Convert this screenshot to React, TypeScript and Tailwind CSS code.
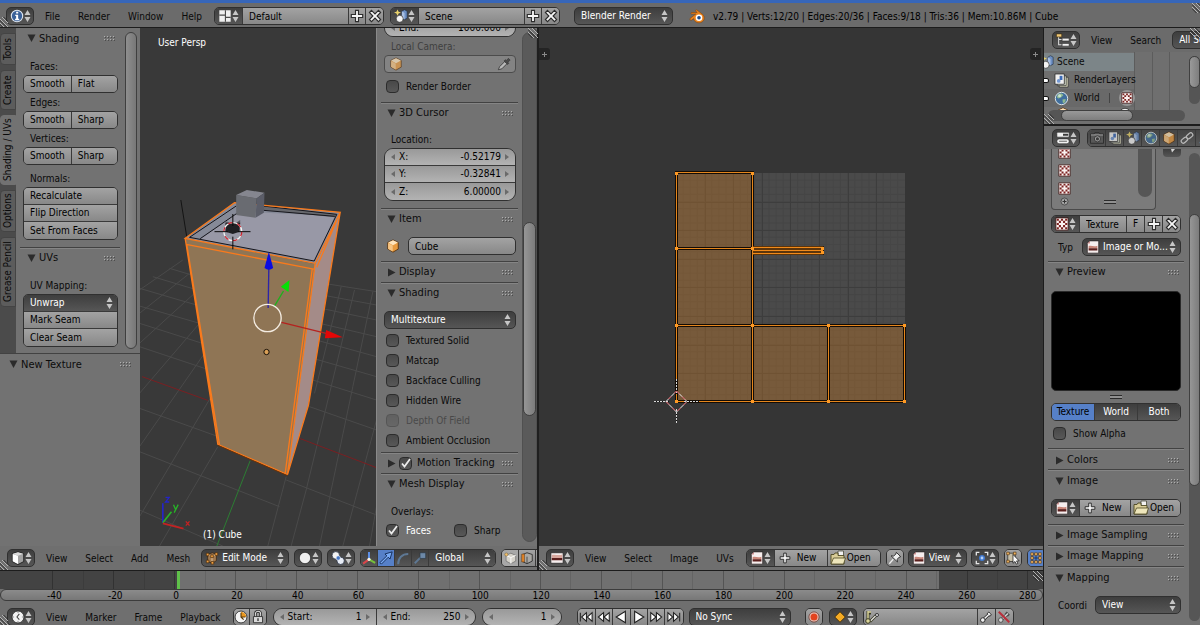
import type { ReactNode } from "react";
import clsx from "clsx";

const light = "bg-gradient-to-b from-[#a3a3a3] to-[#888888] text-black";
const dark = "bg-gradient-to-b from-[#3e3e3e] to-[#565656] text-white";
const frame = "border border-[#303030] rounded-[5px] overflow-hidden";

/* ---------- icons ---------- */

function UpDown() {
  return (
    <svg viewBox="0 0 7 12" className="pointer-events-none h-3 w-[7px] shrink-0" fill="#c6c6c6">
      <path d="M3.5 0 6.5 5h-6zM3.5 12 6.500 7h-6z" />
    </svg>
  );
}

function Triangle({ open }: { open: boolean }) {
  return (
    <svg viewBox="0 0 9 9" className="h-[9px] w-[9px] shrink-0" fill="#2b2b2b">
      <path d={open ? "M0.5 0.500h8L4.5 8z" : "M1 0.5v8L8.5 4.5z"} />
    </svg>
  );
}

function Grip() {
  return (
    <svg viewBox="0 0 12 5" className="h-[5px] w-3 shrink-0" shapeRendering="crispEdges">
      {[0, 3, 6, 9].map((x) => (
        <g key={x}>
          <path d={`M${x} 0h1v1h-1zM${x} 3h1v1h-1z`} fill="#b0b0b0" />
          <path d={`M${x + 1} 1h1v1h-1zM${x + 1} 4h1v1h-1z`} fill="#4c4c4c" />
        </g>
      ))}
    </svg>
  );
}

// diagonal handle in the corner of an area, used to split it
function Corner({ className }: { className: string }) {
  return (
    <svg viewBox="0 0 10 10" className={clsx("pointer-events-none absolute h-2.5 w-2.5", className)} fill="none">
      <path d="M0 0l10 10M0 4l6 6M4 0l6 6" stroke="#b4b4b4" />
      <path d="M0 1.500 8.500 10M0 5.500 4.500 10M5.500 0 10 4.500" stroke="#2a2a2a" />
    </svg>
  );
}

function Icon({ name, size = "h-3.5 w-3.5" }: { name: keyof typeof icons; size?: string }) {
  return (
    <svg viewBox="0 0 16 16" className={clsx("shrink-0", size)} fill="none">
      {icons[name]}
    </svg>
  );
}

const icons = {
  info: (
    <>
      <circle cx="8" cy="8" r="6.500" fill="#3a6199" stroke="#dfe8f3" strokeWidth="1.200" />
      <path d="M7 3h2.400v2.200H7zM6 6.600h3.300v4.600h1.200v1.600H5.800v-1.600H7V8.100H6z" fill="#fff" />
    </>
  ),
  layout: (
    <>
      <path d="M1.500 1.500h13v13h-13z" fill="#efefef" />
      <path d="M8.500 1.500v13M1.500 7h7M8.500 9.500h6" stroke="#4a4a4a" strokeWidth="1.300" />
    </>
  ),
  scene: (
    <>
      <path d="M4 0.5 5.2 3 8 4 5.2 5.2 4 8 2.8 5.2 0 4 2.8 3z" fill="#e9d36b" />
      <path d="M9 2.500 12 0.8 15 2.500v8l-3 1.600L9 10.500z" fill="#6c8fc4" stroke="#1d2c44" strokeWidth=".7" />
      <path d="M12 4.500v7.600L9 10.500v-8z" fill="#a9c0e2" />
      <circle cx="6.500" cy="11.200" r="4" fill="#f4f4f4" stroke="#222" strokeWidth=".7" />
    </>
  ),
  plus: (
    <path d="M6.3 1.500h3.400v4.800h4.800v3.400H9.700v4.800H6.300V9.700H1.500V6.300h4.800z" fill="#f6f6f6" stroke="#2c2c2c" strokeWidth="1.300" />
  ),
  cross: (
    <path d="M4 1.600 8 5.600l4-4L14.400 4l-4 4 4 4L12 14.400l-4-4-4 4L1.600 12l4-4-4-4z" fill="#f6f6f6" stroke="#2c2c2c" strokeWidth="1.300" />
  ),
  blender: (
    <>
      <path d="M1 10.500 6.800 6H2.600c-1 0-1-1.500 0-1.500h5.600L6.800 3.300c-.7-.7.3-1.900 1.200-1.300l5.500 4.300c3.300 3 1.700 8.400-3.500 8.500-3 0-5-1.800-5.300-4.200l-2 1.500C1.600 12.700.2 11.400 1 10.500z" fill="#e8821e" stroke="#7d3c05" strokeWidth=".5" />
      <circle cx="10" cy="9.800" r="3.300" fill="#fff" />
      <circle cx="10" cy="9.800" r="1.800" fill="#1f4b87" />
    </>
  ),
  cube: (
    <>
      <path d="M8 1 14 4v7.500L8 15l-6-3.500V4z" fill="#e79a3f" stroke="#4e2a08" strokeWidth=".9" />
      <path d="M8 1.400 13.600 4 8 7 2.400 4z" fill="#fde4bd" />
      <path d="M2.400 4.500 7.700 7.300v7L2.400 11.300z" fill="#f6c584" />
    </>
  ),
  grayCube: (
    <>
      <path d="M8 1 14.500 3v9L8 15.500 1.500 12V3z" fill="#a2a2a2" stroke="#161616" strokeWidth=".9" />
      <path d="M2 3.500 8 5.500v9.300l-6-3.200z" fill="#fff" />
      <path d="M8 1.300 14 3.200 8 5.300 2 3.200z" fill="#dcdcdc" />
    </>
  ),
  editCube: (
    <>
      <path d="M3 4l5.500-2L13 4v7l-4.500 3L3 12z" fill="#a17a50" stroke="#32200f" strokeWidth=".8" />
      <path d="M3 4l5 2v7.500M8 6l5-2" stroke="#e8c9a2" strokeWidth="1" />
      <path d="M1.500 2.500h3v3h-3zM11.500 2h3v3h-3zM6.500 4.500h3v3h-3zM1.500 10.500h3v3h-3zM7 12h3v3H7z" fill="#f0a040" stroke="#3c2106" strokeWidth=".7" />
    </>
  ),
  ball: <circle cx="8" cy="8" r="6.500" fill="#f1f1f1" stroke="#1c1c1c" strokeWidth=".8" />,
  pivot: (
    <>
      <circle cx="5.500" cy="5" r="4.300" fill="#f3f3f3" stroke="#182337" strokeWidth=".8" />
      <circle cx="11" cy="11.200" r="4.200" fill="#e7ecf5" stroke="#182337" strokeWidth=".8" />
      <circle cx="8.300" cy="8" r="2.500" fill="#4676c4" stroke="#fff" strokeWidth=".7" />
    </>
  ),
  axes: (
    <>
      <path d="M8 9.500V1" stroke="#5f93ee" strokeWidth="2.200" />
      <path d="M8 9.500 1.200 14.500" stroke="#d8454a" strokeWidth="2.400" />
      <path d="M8 9.500l7 4" stroke="#76c23a" strokeWidth="2.400" />
      <circle cx="8" cy="9.500" r="1.800" fill="#f5f5e8" />
    </>
  ),
  arrow: <path d="M1 13.300 9 5.500 6.800 3.400 15 1l-2.400 8.200-2-2.100L2.700 15z" fill="#79aaf5" stroke="#0e2650" strokeWidth="1" />,
  arc: <path d="M2.500 15C2.500 8 7 3.500 14 3.500" stroke="#5e7894" strokeWidth="2.200" />,
  scale: (
    <>
      <path d="M2 14 9 7" stroke="#5e7894" strokeWidth="2.200" />
      <path d="M8 2h6.500v6.500H8z" fill="#6d89a8" stroke="#26313d" strokeWidth=".7" />
    </>
  ),
  vertexCube: (
    <>
      <path d="M9 2.500 14.500 5v6.500L9 14.500 3.500 11.500V5z" fill="#d6d3cb" stroke="#6b6b6b" strokeWidth=".8" />
      <path d="M3.500 5 9 7.500v7M9 7.500 14.500 5" stroke="#fff" />
      <circle cx="3.800" cy="4" r="1.800" fill="#f3c06a" stroke="#75623c" strokeWidth=".6" />
    </>
  ),
  edgeCube: (
    <>
      <path d="M8 2 14 4v7.500L8 14.500 3 12V4z" fill="#aaa8a4" stroke="#1e1e1e" strokeWidth=".9" />
      <path d="M8 6.500V14" stroke="#444" />
      <path d="M2 3.500h3v9H2z" fill="#e8882a" stroke="#4e2a08" strokeWidth=".6" />
    </>
  ),
  image: (
    <>
      <path d="M4.500 1H14.500v14H1.500V4z" fill="#f6eeee" stroke="#2a2222" strokeWidth=".8" />
      <path d="M3 7c3-1 6 1 10-.5v3H3z" fill="#c98679" />
      <path d="M3 9.300h10v2.700H3z" fill="#5b1f1d" />
      <path d="M1.500 4h3V1z" fill="#d09090" />
    </>
  ),
  imageEditor: (
    <>
      <path d="M1 2h14v12H1z" fill="#f6eeee" stroke="#1c1c1c" strokeWidth=".8" />
      <path d="M2 4.500c4-1.200 8 1.200 12-.5v4H2z" fill="#d9a79e" />
      <path d="M2 8h12v2.500H2z" fill="#5b1f1d" />
    </>
  ),
  folder: (
    <>
      <path d="M8 1h5.500v7H8z" fill="#f2f2f2" stroke="#4a4a3a" strokeWidth=".8" />
      <path d="M1 4.500h3l1-1.500h3v2.500h6V14H1z" fill="#d9cd98" stroke="#4d4722" strokeWidth=".9" />
      <path d="M3.500 8H15.500L13.500 14H1z" fill="#eee6bb" stroke="#4d4722" strokeWidth=".8" />
    </>
  ),
  pin: (
    <>
      <path d="M1.500 14.500 6 9.500" stroke="#ededed" strokeWidth="1.500" />
      <path d="M9.500 1.500 14.500 6.500 12.500 7.200 10.500 9.500l.3 3L3.500 5.500l3 .3L9 3.500z" fill="#efefef" stroke="#242424" strokeWidth="1" />
    </>
  ),
  bounds: (
    <>
      <path d="M1.500 5V1.500H5M11 1.500h3.500V5M14.500 11v3.500H11M5 14.500H1.500V11" stroke="#e6e6e6" strokeWidth="1.500" />
      <circle cx="8" cy="8" r="2.500" fill="#b5d0f5" stroke="#3f78cf" strokeWidth="1.800" />
    </>
  ),
  sync: (
    <>
      <path d="M2 2.500h8.500V12H2z" fill="#c9c0a8" stroke="#222" strokeWidth=".8" />
      <path d="M.8 1.300h3v3h-3zM8.500 1.300h3v3h-3zM.8 10.500h3v3h-3z" fill="#f3b55d" stroke="#3c2106" strokeWidth=".6" />
      <path d="M8 4v10l2.300-2 1.500 3 1.700-.8-1.500-2.900H15z" fill="#fff" stroke="#111" strokeWidth=".8" />
    </>
  ),
  verts: (
    <>
      <path d="M3.500 3.500h9v9h-9zM8 3.500v9M3.500 8h9" stroke="#15305f" strokeWidth="1" />
      <path d="M2 2h3v3H2zM6.500 2h3v3h-3zM11 2h3v3h-3zM2 6.500h3v3H2zM11 6.500h3v3h-3zM2 11h3v3H2zM6.500 11h3v3h-3zM11 11h3v3h-3z" fill="#f3b55d" stroke="#4a2a05" strokeWidth=".6" />
    </>
  ),
  timeline: (
    <>
      <circle cx="8" cy="8" r="6.800" fill="#f2f2f2" stroke="#1c1c1c" strokeWidth=".8" />
      <path d="M9.500 4.500 6.800 8l2.700 3" stroke="#444" strokeWidth="1.200" />
      <path d="M8 2v1.500M8 12.500V14M2 8h1.500M12.500 8H14" stroke="#777" strokeWidth=".9" />
    </>
  ),
  clock: (
    <>
      <circle cx="8" cy="8" r="6.800" fill="#f4f4f4" stroke="#2a2a2a" strokeWidth="1" />
      <path d="M8 8V2a6 6 0 0 1 6 6z" fill="#e9971f" />
      <path d="M8 3v5h5M8 8l3 3" stroke="#5c3a08" strokeWidth="1.300" />
    </>
  ),
  lock: (
    <>
      <path d="M5 8V4.500a3 3 0 0 1 6 0V8" stroke="#2a2a2a" strokeWidth="3" />
      <path d="M5 8V4.500a3 3 0 0 1 6 0V8" stroke="#dcdcdc" strokeWidth="1.200" />
      <path d="M2.800 7.500h10.400v7H2.800z" fill="#d9d9d9" stroke="#2a2a2a" strokeWidth="1" />
      <path d="M8 9.500v3" stroke="#333" strokeWidth="1.500" />
    </>
  ),
  first: <path d="M1.500 3v10M8.500 3v10L3 8zM15 3v10L9.500 8z" fill="#fff" stroke="#222" strokeWidth="1.200" />,
  prev: <path d="M7.500 3v10L1.500 8zM14 3v10L8 8z" fill="#fff" stroke="#222" strokeWidth="1.200" />,
  playBack: <path d="M13 1.500v13L2.500 8z" fill="#fff" stroke="#222" strokeWidth="1.300" />,
  play: <path d="M3 1.500v13L13.500 8z" fill="#fff" stroke="#222" strokeWidth="1.300" />,
  next: <path d="M2 3v10l6-5zM8.500 3v10l6-5z" fill="#fff" stroke="#222" strokeWidth="1.200" />,
  last: <path d="M1 3v10l5.500-5zM7.500 3v10L13 8zM14.500 3v10" fill="#fff" stroke="#222" strokeWidth="1.200" />,
  record: (
    <>
      <circle cx="8" cy="8" r="5.800" fill="#e9c7bd" stroke="#6a2a20" strokeWidth=".8" />
      <circle cx="8" cy="8" r="4" fill="#e2431f" />
    </>
  ),
  diamond: <path d="M8 2 14 8 8 14 2 8z" fill="#f4ab24" stroke="#3a2503" strokeWidth=".9" />,
  keys: (
    <>
      <path d="M4 2v8M4 4h3M6 12.500 13 5.500" stroke="#3a3a22" strokeWidth="3" />
      <path d="M4 2v8M4 3h3" stroke="#dad49a" strokeWidth="1.500" />
      <path d="M6.500 12 13 5.500" stroke="#e4e4e4" strokeWidth="1.300" />
      <circle cx="4" cy="12" r="2.300" fill="#dad49a" stroke="#3a3a22" />
      <circle cx="13" cy="6" r="1.500" fill="#efefef" stroke="#333" />
    </>
  ),
  key: (
    <>
      <path d="M5 11 12.500 4M10 3l3.500 3.500" stroke="#262626" strokeWidth="3.300" />
      <path d="M5 11 12.500 4M10.500 3.500l2.500 2.500" stroke="#f1f1f1" strokeWidth="1.600" />
      <circle cx="4.300" cy="11.500" r="2.600" fill="#f1f1f1" stroke="#262626" />
    </>
  ),
  keyOff: (
    <>
      <path d="M5 11 12.500 4M10 3l3.500 3.500" stroke="#4a4a4a" strokeWidth="3.300" />
      <path d="M5 11 12.500 4" stroke="#d5d5d5" strokeWidth="1.600" />
      <circle cx="4.300" cy="11.500" r="2.600" fill="#d5d5d5" stroke="#4a4a4a" />
      <path d="M2 2l12 12" stroke="#b92f3a" strokeWidth="2.200" />
    </>
  ),
  outliner: (
    <>
      <path d="M3 3v10.500h3.500M3 7.500h3.500" stroke="#d9d9d9" strokeWidth="1.200" />
      <path d="M0.500 1h6v3.500h-6z" fill="#f0c878" stroke="#3f2e0c" strokeWidth=".7" />
      <path d="M7 6h8v3H7zM7 12h8v3H7z" fill="#f1f1f1" stroke="#222" strokeWidth=".6" />
    </>
  ),
  properties: (
    <>
      <rect x="1" y="1.500" width="14" height="5.500" rx="1" fill="#f1f1f1" stroke="#222" strokeWidth=".6" />
      <path d="M8 3h6v2.500H8z" fill="#3a3a3a" />
      <rect x="1" y="9" width="14" height="5.500" rx="2.500" fill="#f1f1f1" stroke="#222" strokeWidth=".6" />
      <path d="M3.500 11.700h9" stroke="#555" />
    </>
  ),
  camera: (
    <>
      <path d="M0.500 3.500h4l1-1.500h5l1 1.500h4v10.500h-15z" fill="#5d5d5d" stroke="#141414" strokeWidth=".9" />
      <path d="M1 4.500h14" stroke="#c9c9c9" />
      <circle cx="8.500" cy="9" r="3.500" fill="#bdbdbd" stroke="#222" />
      <circle cx="8.500" cy="9" r="1.800" fill="#333" />
    </>
  ),
  layers: (
    <>
      <path d="M5.500 4.500h9.500v10.500H5.500z" fill="#e9e7c8" stroke="#2b2b2b" strokeWidth=".8" />
      <path d="M3.500 3h9.500v10.500H3.500z" fill="#dfe4d0" stroke="#2b2b2b" strokeWidth=".8" />
      <path d="M1 1h10v11H1z" fill="#f1f1f1" stroke="#2b2b2b" strokeWidth=".9" />
      <path d="M6 3h3v4.500H6z" fill="#3c6bb8" />
      <circle cx="5" cy="8.500" r="2" fill="#7398d3" />
    </>
  ),
  world: (
    <>
      <circle cx="8" cy="8" r="6.600" fill="#416f9e" stroke="#e4ecec" strokeWidth="1" />
      <path d="M4 4c2-2 5-1.500 6 .5L7.500 7 4.500 8 3 6.500zM9 9l3.500-.5L12 12l-2.500 1z" fill="#8fb98f" />
      <circle cx="6" cy="5" r="1.600" fill="#e7f4ee" opacity=".7" />
    </>
  ),
  link: (
    <>
      <rect x="-4" y="-2.300" width="8" height="4.600" rx="2.300" transform="translate(5 10.500) rotate(-40)" stroke="#dedede" strokeWidth="1.400" />
      <rect x="-4" y="-2.300" width="8" height="4.600" rx="2.300" transform="translate(11 5.500) rotate(-40)" stroke="#dedede" strokeWidth="1.400" />
    </>
  ),
  texture: (
    <>
      <path d="M1 1h14v14H1z" fill="#fbf3f2" stroke="#3a1715" strokeWidth="1" />
      <path d="M2 2h2.400v2.400H2zM6.800 2h2.400v2.400H6.800zM11.600 2H14v2.400h-2.400zM4.400 4.400h2.400v2.400H4.400zM9.200 4.400h2.400v2.400H9.200zM2 6.800h2.400v2.400H2zM11.600 6.800H14v2.400h-2.400zM4.400 9.200h2.400v2.400H4.400zM9.200 9.200h2.400v2.400H9.200zM2 11.600h2.400V14H2zM6.800 11.600h2.400V14H6.800zM11.600 11.600H14V14h-2.400z" fill="#7c2321" />
    </>
  ),
  dropper: (
    <>
      <path d="M1.500 14.500 3 11 9 5l2.500 2.500-6 6z" fill="#b9b9b9" stroke="#333" strokeWidth=".9" />
      <path d="M8 4.500 9.500 3l1.200 1L13 1.500 15 3.500 12.500 6l1 1.200L12 8.500z" fill="#4a4a4a" stroke="#2c2c2c" strokeWidth=".6" />
    </>
  ),
};

/* ---------- widgets ---------- */

function MenuButton({ icon, label, flat }: { icon: keyof typeof icons; label: string; flat?: boolean }) {
  return (
    <button aria-label={label} className={clsx("flex w-7 shrink-0 items-center justify-between px-[3px]", dark, flat ? "h-4" : "h-[18px]", !flat && frame)}>
      <Icon name={icon} />
      <UpDown />
    </button>
  );
}

function IconButton({ icon, label, tone = light, className = "w-[17px]" }: { icon: keyof typeof icons; label: string; tone?: string; className?: string }) {
  return (
    <button aria-label={label} className={clsx("flex h-4 shrink-0 items-center justify-center", tone, className)}>
      <Icon name={icon} />
    </button>
  );
}

function Menus({ items }: { items: string[] }) {
  return (
    <nav className="ml-[11px] flex gap-[18px] pt-0.5">
      {items.map((m) => <button key={m}>{m}</button>)}
    </nav>
  );
}

function Group({ children, className }: { children: ReactNode; className?: string }) {
  return <div className={clsx("flex shrink-0 divide-x divide-[#3a3a3a]", frame, className)}>{children}</div>;
}

function Stack({ children, round = "rounded-[5px]" }: { children: ReactNode; round?: string }) {
  return <div className={clsx("flex flex-col divide-y divide-[#3a3a3a] overflow-hidden border border-[#303030] *:h-[17px]", round)}>{children}</div>;
}

function Button({ children, className }: { children: ReactNode; className?: string }) {
  return <button className={clsx("h-4 px-1.5 text-left", light, className)}>{children}</button>;
}

function Dropdown({ label, value, icon, className, bare }: { label: string; value: string; icon?: keyof typeof icons; className?: string; bare?: boolean }) {
  return (
    <div className={clsx("flex shrink-0 items-center gap-[3px] pr-1", icon ? "pl-[3px]" : "pl-1.5", dark, bare ? "h-4" : "h-[18px]", !bare && frame, className)}>
      {icon && <Icon name={icon} />}
      <select aria-label={label} className="-mr-1 h-4 min-w-0 flex-1 appearance-none bg-transparent">
        <option>{value}</option>
      </select>
      <UpDown />
    </div>
  );
}

function NumberField({ label, value, className, name }: { label?: string; value: string; className?: string; name?: string }) {
  return (
    <label className={clsx("flex h-4 items-center gap-1 bg-gradient-to-b from-[#999999] to-[#b3b3b3] px-1.5 text-black", className)}>
      <svg viewBox="0 0 4 6" className="h-1.5 w-1 shrink-0" fill="#6a6a6a"><path d="M4 0v6L0 3z" /></svg>
      {label}
      <input aria-label={label ?? name} defaultValue={value} className="w-0 min-w-0 flex-1 bg-transparent text-right" />
      <svg viewBox="0 0 4 6" className="h-1.5 w-1 shrink-0" fill="#6a6a6a"><path d="M0 0v6L4 3z" /></svg>
    </label>
  );
}

function Check({ label, checked, disabled, className, hideLabel }: { label: string; checked?: boolean; disabled?: boolean; className?: string; hideLabel?: boolean }) {
  return (
    <label className={clsx("flex h-5 items-center", disabled && "opacity-40", className)}>
      <span className="grid">
        <input
          type="checkbox"
          aria-label={label}
          defaultChecked={checked}
          disabled={disabled}
          className="peer col-start-1 row-start-1 h-[13px] w-[13px] appearance-none rounded-[4px] border border-[#2c2c2c] bg-gradient-to-b from-[#484848] to-[#585858]"
        />
        <svg viewBox="0 0 13 13" className="pointer-events-none invisible col-start-1 row-start-1 h-[13px] w-[13px] overflow-visible peer-checked:visible" fill="none">
          <path d="M3 6.500 5.500 9.500 11 2" stroke="#ececec" strokeWidth="1.800" />
        </svg>
      </span>
      {!hideLabel && <span className="ml-[7px] pt-0.5">{label}</span>}
    </label>
  );
}

function PanelTitle({ title, open = true, first, children, className }: { title: string; open?: boolean; first?: boolean; children?: ReactNode; className?: string }) {
  return (
    <div className={clsx("flex h-[21px] shrink-0 items-center gap-[3px] pr-1 text-[11px] text-[#0c0c0c]", !first && "border-t border-[#424242] shadow-[inset_0_1px_0_#858585]", className)}>
      <Triangle open={open} />
      {children}
      <h2 className="flex-1 whitespace-nowrap">{title}</h2>
      <Grip />
    </div>
  );
}

function Label({ children, className }: { children: ReactNode; className?: string }) {
  return <div className={clsx("flex h-[18px] items-center pl-[7px] pt-0.5", className)}>{children}</div>;
}

/* ---------- top bar ---------- */

function TopBar() {
  return (
    <header className="relative flex h-[25px] shrink-0 items-center overflow-hidden whitespace-nowrap border-b border-[#1c1c1c] bg-[#6b6b6b] pb-0.5 pl-1.5 pt-1">
      <MenuButton icon="info" label="Editor type" />
      <Menus items={["File", "Render", "Window", "Help"]} />
      <Group className="ml-3">
        <MenuButton icon="layout" label="Screen layout" flat />
        <input aria-label="Screen" defaultValue="Default" className={clsx("h-4 w-[106px] px-1.5", light)} />
        <IconButton icon="plus" label="Add screen" />
        <IconButton icon="cross" label="Delete screen" />
      </Group>
      <Group className="ml-1.5">
        <MenuButton icon="scene" label="Browse scene" flat />
        <input aria-label="Scene" defaultValue="Scene" className={clsx("h-4 w-[106px] px-1.5", light)} />
        <IconButton icon="plus" label="Add scene" />
        <IconButton icon="cross" label="Delete scene" />
      </Group>
      <Dropdown label="Render engine" value="Blender Render" className="ml-3.5 w-[99px]" />
      <span className="ml-4"><Icon name="blender" size="h-4 w-4" /></span>
      <span className="ml-2 pt-0.5 text-black">v2.79 | Verts:12/20 | Edges:20/36 | Faces:9/18 | Tris:36 | Mem:10.86M | Cube</span>
      <Corner className="-left-0.5 bottom-0" />
      <Corner className="-right-0.5 top-0" />
    </header>
  );
}

/* ---------- 3D view ---------- */

const tabs = [
  { name: "Tools", size: "h-8" },
  { name: "Create", size: "h-10" },
  { name: "Shading / UVs", size: "h-[70px]", active: true },
  { name: "Options", size: "h-[42px]" },
  { name: "Grease Pencil", size: "h-[70px]" },
];

function ToolShelf() {
  return (
    <aside className="flex w-[140px] shrink-0 flex-col overflow-hidden bg-[#727272]">
      <div className="flex border-b border-[#424242]">
        <div className="flex w-4 shrink-0 flex-col gap-[5px] bg-[#4b4b4b] pt-[5px]">
          {tabs.map((t) => (
            <button
              key={t.name}
              className={clsx(
                "flex w-4 rotate-180 items-center justify-center whitespace-nowrap rounded-r-[4px] border [writing-mode:vertical-rl]",
                t.size,
                t.active ? "border-[#727272] bg-[#727272]" : "border-[#444444] bg-[#5c5c5c]",
              )}
            >
              {t.name}
            </button>
          ))}
        </div>
        <div className="min-w-0 flex-1 pb-[6px] pl-1">
          <PanelTitle title="Shading" first className="pl-[7px]" />
          <div className="pb-[7px] pl-[3px] pr-0.5 pt-2">
            {[["Faces:", "Smooth", "Flat"], ["Edges:", "Smooth", "Sharp"], ["Vertices:", "Smooth", "Sharp"]].map(([l, a, b]) => (
              <div key={l}>
                <Label>{l}</Label>
                <Group>
                  <Button className="flex-1">{a}</Button>
                  <Button className="flex-1">{b}</Button>
                </Group>
              </div>
            ))}
            <Label className="mt-1">Normals:</Label>
            <Stack>
              <Button>Recalculate</Button>
              <Button>Flip Direction</Button>
              <Button>Set From Faces</Button>
            </Stack>
          </div>
          <PanelTitle title="UVs" className="pl-[7px]" />
          <div className="pl-[3px] pr-0.5 pt-2">
            <Label>UV Mapping:</Label>
            <Stack>
              <Dropdown label="UV Mapping" value="Unwrap" bare />
              <Button>Mark Seam</Button>
              <Button>Clear Seam</Button>
            </Stack>
          </div>
        </div>
        <div className="w-5 shrink-0 py-1 pl-[5px]">
          <div className="h-full w-3 rounded-full border border-[#3f3f3f] bg-gradient-to-r from-[#8f8f8f] to-[#777777]" />
        </div>
      </div>
      <PanelTitle title="New Texture" first className="pl-[9px] pr-2" />
    </aside>
  );
}

function Viewport() {
  return (
    <div className="relative min-w-0 flex-1 bg-[#393939]">
      <svg viewBox="0 -456 711 1554" preserveAspectRatio="xMidYMid slice" className="absolute inset-0 h-full w-full" fill="none" strokeWidth="3">
        <g stroke="#4a4a4a">
          <path d="M90 265 180 292M40 290 190 335M0 325 205 385M0 378 215 440M0 430 220 500M0 500 225 575M0 685 320 800M0 815 420 980M0 990 250 1098M565 312 711 335M548 345 711 375M545 385 711 420M540 430 711 470M530 480 711 530M520 535 711 590M520 600 711 660M510 680 711 750M440 900 711 1005" />
          <path d="M130 240 0 330M150 280 0 400M165 340 0 490M180 430 0 640M195 520 0 800M215 650 0 1010M235 800 60 1098M440 890 385 1098M605 320 525 640M645 330 500 930 455 1098M700 335 640 620 540 1098M711 720 610 1098M711 980 690 1098" />
        </g>
        <path d="M8 590 205 661M480 775 711 863" stroke="#7a1f22" />
        <path d="M332 842 232 1098" stroke="#2c7d33" />

        <path d="M124 60 142 172" stroke="#141414" />
        <path d="M137 175 285 68 602 97 527 252z" fill="#868a98" />
        <path d="M182 178 300 95 586 108 524 243z" fill="#9898a6" />
        <path d="M370 78 592 103 586 112 372 90z" fill="#66676c" />
        <path d="M137 175 527 252 526 268 444 884 235 793z" fill="#8f7555" />
        <path d="M602 97 527 252 444 884 507 675z" fill="#a48b88" />
        <path d="M150 172 290 78M182 176 298 96M370 78 592 103M372 91 586 109M592 103 524 243M150 172 524 243" stroke="#15151b" />
        <path d="M137 175 285 68 602 97 527 250zM140 193 526 268M137 175 235 793 444 884M142 195 240 794M527 250 444 884 507 675 602 97M518 268 437 880M592 120 532 262" stroke="#f97a1c" strokeWidth="4" />
        <path d="M235 796 444 887" stroke="#6a3208" />

        <path d="M290 45 352 55 348 113 290 105z" fill="#696b71" />
        <path d="M290 45 322 30 375 38 352 55z" fill="#85868f" />
        <path d="M352 55 375 38 373 98 348 113z" fill="#5b5d68" />

        <path d="M258 124 285 132 302 120 302 132 258 134z" fill="#55565e" />
        <path d="M258 130 302 128 300 155 280 162 258 155z" fill="#202024" />
        <circle cx="280" cy="155" r="27" stroke="#f4f4f4" strokeWidth="4" />
        <circle cx="280" cy="155" r="27" stroke="#c9222e" strokeWidth="4" strokeDasharray="14 14" />
        <path d="M225 155h40M295 155h38M280 102v36M280 170v38" stroke="#0b0b0b" />

        <path d="M386 384 388 262" stroke="#2d24a8" strokeWidth="4" />
        <path d="M375 264 388 215 401 264q-13 10-26 0z" fill="#0b0be0" />
        <path d="M404 380 432 333" stroke="#1db11d" strokeWidth="4" />
        <path d="M424 320 450 300 447 336z" fill="#06e006" />
        <path d="M426 427 560 460" stroke="#b5221f" strokeWidth="4" />
        <path d="M560 450 610 472 556 475z" fill="#e40606" />
        <circle cx="384" cy="414" r="41" stroke="#f4ece2" strokeWidth="4" />
        <circle cx="381" cy="516" r="8" fill="#d9a057" stroke="#171009" strokeWidth="3" />

        <path d="M70 1028V970" stroke="#2424c8" strokeWidth="5" />
        <path d="M70 1028 96 995" stroke="#27b327" strokeWidth="5" />
        <path d="M70 1030 132 1046" stroke="#c42222" strokeWidth="5" />
        <path d="M78 952h11l-11 14h11" stroke="#2424c8" strokeWidth="4" />
        <path d="M102 974l6 14M116 974l-12 24" stroke="#27b327" strokeWidth="4" />
        <path d="M139 1024l11 13M150 1024l-11 13" stroke="#c42222" strokeWidth="4" />
      </svg>
      <p className="absolute left-[18px] top-[9px] text-white">User Persp</p>
      <p className="absolute bottom-[5px] left-[63px] text-white">(1) Cube</p>
    </div>
  );
}

function PropertiesShelf() {
  return (
    <aside className="flex w-[161px] shrink-0 border-l border-[#8a8a8a] bg-[#727272]">
      <div className="h-0 min-h-full w-[141px] overflow-hidden pl-1">
        <div className="-mt-[9px] pl-[3px] pr-0.5">
          <div className="overflow-hidden rounded-full border border-[#303030]">
            <NumberField label="End:" value="1000.000" />
          </div>
          <Label className="text-[#3f3f3f]">Local Camera:</Label>
          <div className="flex h-[18px] items-center justify-between rounded-[4px] border border-[#4c4c4c] bg-[#838383] px-1">
            <span className="flex opacity-70"><Icon name="cube" /></span>
            <input aria-label="Local Camera" className="min-w-0 flex-1 bg-transparent" />
            <Icon name="dropper" />
          </div>
          <Check label="Render Border" className="mb-[6px] mt-[3px] pl-0.5" />
        </div>

        <PanelTitle title="3D Cursor" className="pl-1.5" />
        <div className="pb-[7px] pl-[3px] pr-0.5 pt-[7px]">
          <Label>Location:</Label>
          <Stack round="rounded-[9px]">
            <NumberField label="X:" value="-0.52179" />
            <NumberField label="Y:" value="-0.32841" />
            <NumberField label="Z:" value="6.00000" />
          </Stack>
        </div>

        <PanelTitle title="Item" className="pl-1.5" />
        <div className="flex items-center gap-2 pb-1.5 pl-[3px] pr-0.5 pt-2">
          <span className="pl-0.5"><Icon name="cube" /></span>
          <input aria-label="Item name" defaultValue="Cube" className={clsx("h-[18px] min-w-0 flex-1 px-1.5", light, frame)} />
        </div>

        <PanelTitle title="Display" open={false} className="pl-1.5" />
        <PanelTitle title="Shading" className="pl-1.5" />
        <div className="pb-0.5 pl-[3px] pr-0.5 pt-2">
          <Dropdown label="Shading mode" value="Multitexture" className="mb-px" />
          <Check label="Textured Solid" className="pl-0.5" />
          <Check label="Matcap" className="pl-0.5" />
          <Check label="Backface Culling" className="pl-0.5" />
          <Check label="Hidden Wire" className="pl-0.5" />
          <Check label="Depth Of Field" disabled className="pl-0.5" />
          <Check label="Ambient Occlusion" className="pl-0.5" />
        </div>

        <PanelTitle title="Motion Tracking" open={false} className="pl-1.5">
          <Check label="Motion Tracking" checked hideLabel className="mr-0.5" />
        </PanelTitle>
        <PanelTitle title="Mesh Display" className="pl-1.5" />
        <div className="pl-[3px] pr-0.5 pt-2">
          <Label>Overlays:</Label>
          <div className="grid grid-cols-2">
            <Check label="Faces" checked className="pl-0.5 text-white" />
            <Check label="Sharp" className="pl-1" />
          </div>
        </div>
      </div>
      <div className="flex flex-1 flex-col py-1 pl-1">
        <div className="flex flex-1 flex-col rounded-full border border-[#505050] bg-[#5a5a5a]">
          <div className="flex-[190]" />
          <div className="flex-[194] rounded-full border border-[#3f3f3f] bg-gradient-to-r from-[#969696] to-[#7c7c7c]" />
          <div className="flex-[126]" />
        </div>
      </div>
    </aside>
  );
}

function View3D() {
  return (
    <section className="relative flex min-w-0 flex-col border-r-2 border-[#1f1f1f]">
      <div className="flex min-h-0 flex-1">
        <ToolShelf />
        <Viewport />
        <PropertiesShelf />
      </div>
      <div className="flex h-6 shrink-0 items-center overflow-hidden whitespace-nowrap bg-[#6f6f6f] pl-[7px]">
        <MenuButton icon="grayCube" label="Editor type" />
        <Menus items={["View", "Select", "Add", "Mesh"]} />
        <Dropdown label="Mode" value="Edit Mode" icon="editCube" className="ml-[11px] w-[88px]" />
        <div className="ml-[5px] flex gap-[5px]">
          <MenuButton icon="ball" label="Viewport shading" />
          <MenuButton icon="pivot" label="Pivot point" />
        </div>
        <Group className="ml-[5px]">
          <IconButton icon="axes" label="Manipulator" tone={dark} />
          <IconButton icon="arrow" label="Translate" tone="bg-[#5680c8]" />
          <IconButton icon="arc" label="Rotate" tone={dark} />
          <IconButton icon="scale" label="Scale" tone={dark} />
          <Dropdown label="Orientation" value="Global" bare className="w-[66px]" />
        </Group>
        <Group className="ml-[5px]">
          <IconButton icon="vertexCube" label="Vertex select" tone="bg-[#a8a8a8]" />
          <IconButton icon="edgeCube" label="Edge select" />
          <IconButton icon="grayCube" label="Face select" />
        </Group>
      </div>
      <Corner className="-left-0.5 bottom-0" />
      <Corner className="-right-px top-0" />
    </section>
  );
}

/* ---------- UV editor ---------- */

const uvEdges = "M676.500 172.500h76v229h-76zM676.500 248.500h76M676.500 325.500h228v76h-228M828.500 325.500v76";
const uvVerts = [[676, 173], [752, 173], [676, 248], [752, 248], [676, 325], [752, 325], [828, 325], [904, 325], [676, 401], [752, 401], [828, 401], [904, 401], [822, 248], [822, 252]];

function UVCanvas() {
  const fine = Array.from({ length: 31 }, (_, i) => 7.15 * (i + 1));
  const coarse = Array.from({ length: 7 }, (_, i) => 28.600 * (i + 1));
  return (
    <div className="relative min-h-0 flex-1 bg-[#353535]">
      <svg viewBox="539 28 504 518" preserveAspectRatio="xMidYMid slice" className="absolute inset-0 h-full w-full" fill="none">
        <path d="M676 173h229v229H676z" fill="#4a4a4a" />
        <g stroke="#464646">
          {fine.map((d) => <path key={d} d={`M${676 + d} 173v229M676 ${173 + d}h229`} />)}
        </g>
        <g stroke="#3d3d3d">
          {coarse.map((d) => <path key={d} d={`M${Math.round(676 + d) + 0.5} 173v229M676 ${Math.round(173 + d) + 0.5}h229`} />)}
        </g>
        <path d="M676 173h77v152h152v77H676z" fill="#c87820" fillOpacity=".36" />
        <path d={uvEdges} stroke="#140c04" strokeWidth="3" />
        <path d={uvEdges} stroke="#e5861c" strokeWidth="1" />
        <path d="M753 246h71v9h-71z" fill="#2a1807" />
        <path d="M753 247.500h70M753 250.500h70M753 253.500h70" stroke="#f18a1a" strokeWidth="1.500" />
        <g fill="#ff9a24">
          {uvVerts.map(([x, y]) => <path key={`${x}-${y}`} d={`M${x - 1} ${y - 1}h3v3h-3z`} />)}
        </g>
        <path d="M654 401.500h15M684 401.500h15M676.500 379v15M676.500 409v14" stroke="#0d0d0d" />
        <path d="M654 401.500h15M684 401.500h15M676.500 379v15M676.500 409v14" stroke="#d8d8d8" strokeDasharray="2 1" />
        <path d="M676.500 391 687 401.500 676.500 412 666 401.500z" stroke="#f0f0f0" />
        <path d="M676.500 391 687 401.500 676.500 412 666 401.500z" stroke="#b9222c" strokeDasharray="4 4" />
      </svg>
      <button aria-label="Open tool shelf" className="absolute left-0 top-5 flex h-3 w-[11px] items-center justify-center rounded-r-[3px] bg-[#242424]">
        <svg viewBox="0 0 7 7" className="h-[7px] w-[7px]" stroke="#8a8a8a"><path d="M3.500 1v5M1 3.500h5" /></svg>
      </button>
      <button aria-label="Open properties" className="absolute right-0.5 top-5 flex h-3 w-[11px] items-center justify-center rounded-l-[3px] bg-[#242424]">
        <svg viewBox="0 0 7 7" className="h-[7px] w-[7px]" stroke="#8a8a8a"><path d="M3.500 1v5M1 3.500h5" /></svg>
      </button>
    </div>
  );
}

function ImageOpenRow({ fill }: { fill?: boolean }) {
  return (
    <Group className={fill ? "w-full" : "ml-3"}>
      <MenuButton icon="image" label="Browse image" flat />
      <button className={clsx("flex h-4 items-center gap-1.5 px-1", light, fill ? "w-[51px]" : "w-[53px]")}>
        <Icon name="plus" size="h-3 w-3" />
        New
      </button>
      <button className={clsx("flex h-4 items-center gap-px px-0.5", light, fill ? "flex-1" : "w-[52px]")}>
        <Icon name="folder" size="h-4 w-4" />
        Open
      </button>
    </Group>
  );
}

function UVEditor() {
  return (
    <section className="relative flex min-w-0 flex-col overflow-hidden">
      <UVCanvas />
      <div className="flex h-6 shrink-0 items-center overflow-hidden whitespace-nowrap bg-[#6f6f6f] pl-[7px]">
        <MenuButton icon="imageEditor" label="Editor type" />
        <Menus items={["View", "Select", "Image", "UVs"]} />
        <ImageOpenRow />
        <Group className="ml-[5px]"><IconButton icon="pin" label="Pin image" className="w-4" /></Group>
        <Dropdown label="Mode" value="View" icon="image" className="ml-1 w-[59px]" />
        <div className="ml-1 flex gap-[5px]">
          <MenuButton icon="bounds" label="Pivot" />
          <Group><IconButton icon="sync" label="Sync selection" className="w-4" /></Group>
          <Group><IconButton icon="verts" label="Vertex select" tone="bg-[#5680c8]" /></Group>
        </div>
      </div>
      <Corner className="-left-0.5 bottom-0" />
    </section>
  );
}

/* ---------- timeline ---------- */

function Timeline() {
  const frames = Array.from({ length: 17 }, (_, i) => -40 + i * 20);
  return (
    <section className="relative h-[55px] shrink-0 overflow-hidden border-t border-[#1c1c1c] bg-[#6f6f6f]">
      <div className="relative h-[18px] overflow-hidden bg-[linear-gradient(90deg,#434343_17%,#707070_17%,#707070_90%,#434343_90%)]">
        <div className="-mr-4 ml-[23px] flex h-full">
          {frames.map((f) => (
            <div key={f} className="flex flex-1 justify-center border-r border-black/10">
              <div className="w-px bg-black/25" />
            </div>
          ))}
        </div>
        <div className="absolute inset-y-0 left-[17%] w-[3px] bg-[#5fc04a]" />
      </div>
      <div className="h-3 overflow-hidden rounded-full border border-[#3c3c3c] bg-gradient-to-b from-[#8b8b8b] to-[#777777]">
        <div className="-mr-4 ml-[23px] flex leading-[11px] text-black">
          {frames.map((f) => <span key={f} className="w-0 flex-1 text-center">{f}</span>)}
        </div>
      </div>
      <div className="flex h-8 items-center whitespace-nowrap pl-[7px]">
        <MenuButton icon="timeline" label="Editor type" />
        <Menus items={["View", "Marker", "Frame", "Playback"]} />
        <Group className="ml-3">
          <IconButton icon="clock" label="Preview range" className="w-4" />
          <IconButton icon="lock" label="Lock time" className="w-4" />
        </Group>
        <div className="ml-1.5 flex w-[203px] shrink-0 divide-x divide-[#3a3a3a] overflow-hidden rounded-full border border-[#303030]">
          <NumberField label="Start:" value="1" className="flex-1" />
          <NumberField label="End:" value="250" className="w-[98px]" />
        </div>
        <div className="ml-1.5 w-20 shrink-0 overflow-hidden rounded-full border border-[#303030]">
          <NumberField name="Current frame" value="1" />
        </div>
        <Group className="ml-[15px]">
          <IconButton icon="first" label="Jump to start" className="w-[18px]" />
          <IconButton icon="prev" label="Previous keyframe" />
          <IconButton icon="playBack" label="Play reversed" className="w-[18px]" />
          <IconButton icon="play" label="Play" />
          <IconButton icon="next" label="Next keyframe" />
          <IconButton icon="last" label="Jump to end" className="w-[18px]" />
        </Group>
        <Dropdown label="Sync mode" value="No Sync" className="ml-[5px] w-[102px]" />
        <Group className="ml-3.5"><IconButton icon="record" label="Record" className="w-4" /></Group>
        <div className="ml-1.5 flex"><MenuButton icon="diamond" label="Keyframe type" /></div>
        <Group className="ml-1.5">
          <div className={clsx("flex h-4 w-[114px] items-center", light)}>
            <Icon name="keys" size="h-4 w-4" />
            <input aria-label="Keying set" className="min-w-0 flex-1 bg-transparent" />
          </div>
          <IconButton icon="key" label="Insert keyframe" className="w-[18px]" />
          <IconButton icon="keyOff" label="Delete keyframe" />
        </Group>
      </div>
      <Corner className="right-0 top-0" />
      <Corner className="-left-0.5 bottom-0" />
    </section>
  );
}

/* ---------- right column ---------- */

function Outliner() {
  return (
    <section className="relative flex shrink-0 flex-col border-b-2 border-[#1c1c1c]">
      <div className="flex h-6 items-center overflow-hidden whitespace-nowrap bg-[#6b6b6b] pl-2">
        <MenuButton icon="outliner" label="Editor type" />
        <Menus items={["View", "Search"]} />
        <Dropdown label="Display mode" value="All Scenes" className="ml-[11px] w-20" />
      </div>
      <div className="flex h-[72px] bg-[#6f6f6f]">
        <div className="min-w-0 flex-1">
          <div className="flex h-[58px] overflow-hidden">
            <ul className="w-[91px] shrink-0 border-r border-[#5c5c5c] pt-px">
              <li className="flex h-[18px] items-center gap-[3px] bg-[#7c8588]">
                <span className="-ml-1 flex"><Icon name="scene" /></span>
                Scene
              </li>
              <li className="flex h-[18px] items-center gap-[5px]">
                <span className="h-[5px] w-[5px] shrink-0 rounded-r-full border border-l-0 border-[#111111] bg-white" />
                <Icon name="layers" size="h-[15px] w-[15px]" />
                RenderLayers
              </li>
              <li className="flex h-[18px] items-center gap-[5px] bg-[#696969]">
                <span className="h-[5px] w-[5px] shrink-0 rounded-r-full border border-l-0 border-[#111111] bg-white" />
                <Icon name="world" size="h-[15px] w-[15px]" />
                World
                <span className="ml-1 h-2.5 w-px shrink-0 bg-[#444444]" />
                <span className="ml-1 flex shrink-0 rounded-full bg-[#959595] p-0.5"><Icon name="texture" size="h-3 w-3" /></span>
              </li>
              <li className="flex h-[18px] gap-12 pl-3"><Icon name="cube" /><Icon name="ball" /></li>
            </ul>
            <div className="w-[18px] border-r border-[#5c5c5c]" />
            <div className="w-[17px] border-r border-[#5c5c5c]" />
          </div>
          <div className="mx-1 flex h-[11px] rounded-full bg-[#555555] pl-[13px]">
            <div className="w-[72px] rounded-full border border-[#404040] bg-gradient-to-b from-[#999999] to-[#7e7e7e]" />
          </div>
        </div>
        <div className="w-[11px] shrink-0 pb-5 pt-1">
          <div className="h-full rounded-full bg-[#555555]">
            <div className="h-8 rounded-full border border-[#404040] bg-gradient-to-r from-[#999999] to-[#7e7e7e]" />
          </div>
        </div>
      </div>
      <Corner className="right-0 top-0" />
      <Corner className="bottom-0 left-0" />
    </section>
  );
}

function Handle() {
  return <div className="mx-auto h-1 w-3 border-y border-[#2b2b2b] bg-[#909090]" />;
}

function PropertiesEditor() {
  return (
    <section className="flex min-h-0 flex-1 flex-col bg-[#727272]">
      <div className="flex h-[23px] shrink-0 items-center overflow-hidden bg-[#6b6b6b] pl-2">
        <MenuButton icon="properties" label="Editor type" />
        <Group className="ml-[7px]">
          {(["camera", "layers", "scene", "world", "cube", "link", "scale"] as const).map((n) => (
            <IconButton key={n} icon={n} label={n} tone="bg-gradient-to-b from-[#454545] to-[#575757]" className="w-[18px] *:opacity-75" />
          ))}
        </Group>
      </div>
      <div className="flex h-0 flex-1 overflow-hidden">
        <div className="min-w-0 flex-1 overflow-hidden pl-1 pr-[5px]">
          <div className="px-[3px]">
            <div className="flex gap-[7px]">
              <div className="flex h-[61px] flex-1 flex-col overflow-hidden rounded-b-[4px] border border-t-0 border-[#4a4a4a] bg-[#7b7b7b]">
                <div className="flex">
                  <ul className="-mt-[6px] flex-1 pl-1.5">
                    {[0, 1, 2].map((i) => <li key={i} className="flex h-[18px] items-center"><Icon name="texture" size="h-[13px] w-[13px]" /></li>)}
                  </ul>
                  <div className="mr-[3px] h-[48px] w-3.5 rounded-b-full bg-[#565656]" />
                </div>
                <div className="flex items-start pl-2">
                  <svg viewBox="0 0 9 9" className="h-[9px] w-[9px]" fill="none" stroke="#333333"><circle cx="4.500" cy="4.500" r="3.500" fill="#a5a5a5" strokeWidth=".7" /><path d="M4.500 2.500v4M2.500 4.500h4" /></svg>
                  <div className="flex-1 pr-1 pt-[3px]"><Handle /></div>
                </div>
              </div>
              <button aria-label="Specials" className={clsx("flex h-2 w-[18px] items-start justify-center rounded-b-[4px]", dark)}>
                <svg viewBox="0 0 5 4" className="h-1 w-[5px]" fill="#d6d6d6"><path d="M1 0h4L2 3.500z" /></svg>
              </button>
            </div>
            <Group className="mt-[5px]">
              <MenuButton icon="texture" label="Browse texture" flat />
              <input aria-label="Texture name" defaultValue="Texture" className={clsx("h-4 w-0 min-w-0 flex-1 px-1.5", light)} />
              <Button className="w-[18px]">F</Button>
              <IconButton icon="plus" label="Add texture" className="w-[18px]" />
              <IconButton icon="cross" label="Unlink texture" />
            </Group>
            <div className="mb-[5px] mt-[5px] flex items-center">
              <span className="w-[31px] pl-[7px] pt-0.5">Typ</span>
              <Dropdown label="Type" value="Image or Mo..." icon="image" className="w-0 flex-1" />
            </div>
          </div>

          <PanelTitle title="Preview" className="pl-[7px]" />
          <div className="px-[3px] pt-[9px]">
            <div className="mb-1 h-[100px] rounded-[5px] border border-[#2a2a2a] bg-black" />
            <Handle />
            <Group className="mt-1">
              <button className="h-4 w-0 flex-1 bg-[#5680c8] text-black">Texture</button>
              <button className={clsx("h-4 w-0 flex-1", dark)}>World</button>
              <button className={clsx("h-4 w-0 flex-1", dark)}>Both</button>
            </Group>
            <Check label="Show Alpha" className="mb-[5px] mt-0.5 pl-0.5" />
          </div>

          <PanelTitle title="Colors" open={false} className="pl-[7px] pt-0.5" />
          <PanelTitle title="Image" className="pl-[7px] pt-0.5" />
          <div className="px-[3px] pb-[7px] pt-[9px]"><ImageOpenRow fill /></div>
          <PanelTitle title="Image Sampling" open={false} className="pl-[7px]" />
          <PanelTitle title="Image Mapping" open={false} className="pl-[7px]" />
          <PanelTitle title="Mapping" className="pl-[7px] pt-0.5" />
          <div className="flex items-center px-[3px] pt-[9px]">
            <span className="w-11 pl-[7px] pt-0.5">Coordi</span>
            <Dropdown label="Coordinates" value="View" className="min-w-0 flex-1" />
          </div>
        </div>
        <div className="flex w-[11px] shrink-0 flex-col py-1">
          <div className="flex flex-1 flex-col rounded-full bg-[#565656]">
            <div className="flex-[62]" />
            <div className="flex-[272] rounded-full border border-[#404040] bg-gradient-to-r from-[#969696] to-[#7c7c7c]" />
            <div className="flex-[136]" />
          </div>
        </div>
      </div>
    </section>
  );
}

export default function App() {
  return (
    <div className="flex h-screen flex-col overflow-hidden bg-[#727272] font-['DejaVu_Sans_Condensed','DejaVu_Sans',sans-serif] text-[10px] leading-3 text-[#0a0a0a]">
      <div className="h-[3px] shrink-0 bg-[#3766b9]" />
      <TopBar />
      <main className="flex min-h-0 flex-1">
        <div className="flex min-w-0 flex-1 flex-col">
          <div className="grid min-h-0 flex-1 grid-cols-[539fr_504fr] grid-rows-[minmax(0,1fr)]">
            <View3D />
            <UVEditor />
          </div>
          <Timeline />
        </div>
        <div className="flex w-[157px] shrink-0 flex-col border-l border-[#1c1c1c]">
          <Outliner />
          <PropertiesEditor />
        </div>
      </main>
    </div>
  );
}
